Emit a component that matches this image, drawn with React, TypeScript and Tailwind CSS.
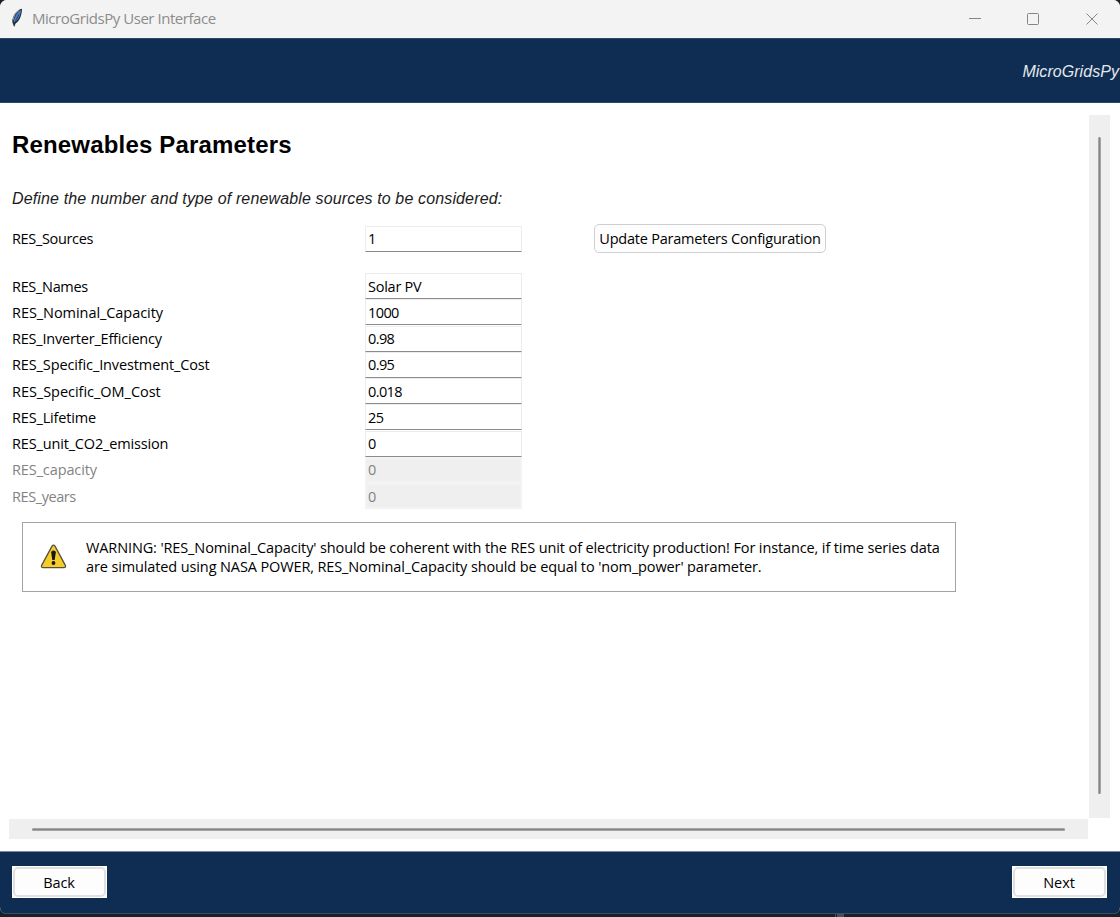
import React from "react";

type Param = { name: string; value: string; tracking: string; disabled?: boolean };

const PARAMS: Param[] = [
  { name: "RES_Names", value: "Solar PV", tracking: "tracking-[-0.32px]" },
  { name: "RES_Nominal_Capacity", value: "1000", tracking: "tracking-[-0.06px]" },
  { name: "RES_Inverter_Efficiency", value: "0.98", tracking: "tracking-[-0.2px]" },
  { name: "RES_Specific_Investment_Cost", value: "0.95", tracking: "tracking-[-0.12px]" },
  { name: "RES_Specific_OM_Cost", value: "0.018", tracking: "tracking-[-0.03px]" },
  { name: "RES_Lifetime", value: "25", tracking: "tracking-[-0.17px]" },
  { name: "RES_unit_CO2_emission", value: "0", tracking: "tracking-[-0.16px]" },
  { name: "RES_capacity", value: "0", tracking: "tracking-[-0.11px]", disabled: true },
  { name: "RES_years", value: "0", tracking: "tracking-[-0.42px]", disabled: true },
];

function Feather() {
  return (
    <svg className="mb-[2px] ml-[10px] h-5 w-[14px]" viewBox="0 0 14 20">
      <path d="M11.9.8C8.9 1.2 5.3 4.3 3.5 8.2c-1.1 2.3-1.6 4.6-1 6.6l1.7 4.2 1-3.2c2.6-1.5 4.5-4 5.5-7.3.9-2.7 1.4-5 1.2-7.7Z" fill="#2b3038" />
      <path d="M11 2C7.8 4 4.6 8.4 3.7 13.8l1 .4C8 12 10.4 8 11 2Z" fill="#4080cf" />
      <path d="M9.3 2.3C6.1 4.3 3.6 7.8 3 12.2" fill="none" stroke="#9aa3ad" strokeWidth="1" />
      <path d="M9 6.4C7.2 9.6 5.5 12.4 4.3 18" fill="none" stroke="#23272e" strokeWidth=".7" />
    </svg>
  );
}

function Field({ value, disabled }: { value: string; disabled?: boolean }) {
  return (
    <div
      className={
        disabled
          ? "flex h-[26px] w-[157px] items-center border-2 border-[#f3f3f3] bg-[#efefef] pl-[1px] text-[#838383]"
          : "flex h-[26px] w-[157px] items-center border border-[#ececec] border-b-[#8b8b8b] bg-white pl-[2px] text-black"
      }
    >
      <span className={value === "Solar PV" ? "tracking-[-0.25px]" : "tracking-[-0.6px]"}>{value}</span>
    </div>
  );
}

function NavButton({ label }: { label: string }) {
  return (
    <div className="h-[32px] w-[95px] bg-white p-[1px]">
      <button className="flex h-full w-full items-center justify-center rounded-[5px] border-2 border-[#e0e0e0] bg-[#fdfdfd] pr-[1px] tracking-[-0.1px]">
        {label}
      </button>
    </div>
  );
}

export default function App() {
  return (
    <div className="flex h-[917px] w-[1120px] flex-col overflow-hidden bg-[#17202b] font-['Open_Sans','Noto_Sans',sans-serif] text-[14.5px] leading-[19px] whitespace-nowrap text-black">
      <div className="flex h-[914px] flex-col overflow-hidden rounded-[7px] bg-white">
        <header className="flex h-[38px] shrink-0 items-center bg-[#f3f3f3]">
          <Feather />
          <span className="mb-[2px] ml-[8px] text-[15px] tracking-[-0.46px] text-[#8c8c8c]">MicroGridsPy User Interface</span>
          <svg className="ml-auto mr-[20px] h-[14px] w-[132px]" viewBox="0 0 132 14" fill="none" stroke="#858585">
            <path d="M1 6.5h12" />
            <rect x="59.5" y="1.5" width="11" height="11" rx="1" />
            <path d="m118.5 1.5 11 11m0-11-11 11" />
          </svg>
        </header>
        <div className="flex h-[65px] shrink-0 items-center justify-end border-y border-[#28466b] bg-[#0f2d52] pr-[1px]">
          <span className="mt-[2px] font-['Liberation_Sans',sans-serif] text-[16px] tracking-[0.05px] text-[#e4e8ed] italic">MicroGridsPy</span>
        </div>
        <main className="flex h-[748px] shrink-0 flex-col pt-[12px] pl-[9px]">
          <div className="flex h-[703px]">
            <section className="w-[1080px] pl-[3px]">
              <h1 className="mt-[15px] font-['Liberation_Sans',sans-serif] text-[24px] leading-[30px] font-bold tracking-[0.17px]">Renewables Parameters</h1>
              <p className="mt-[29px] font-['Liberation_Sans',sans-serif] text-[16px] leading-[20px] tracking-[0.14px] text-[#1c1c1c] italic">
                Define the number and type of renewable sources to be considered:
              </p>
              <div className="mt-[15px] flex h-[29px] items-center">
                <label className="w-[353px] tracking-[-0.34px]">RES_Sources</label>
                <Field value="1" />
                <button className="ml-[72px] h-[29px] w-[232px] rounded-[5px] border border-[#cfcfcf] bg-[#fdfdfd] tracking-[-0.22px]">
                  Update Parameters Configuration
                </button>
              </div>
              <div className="mt-[20px] flex flex-col">
                {PARAMS.map((p) => (
                  <div key={p.name} className="flex h-[26.25px] items-center">
                    <label className={`w-[353px] ${p.tracking} ${p.disabled ? "text-[#838383]" : ""}`}>{p.name}</label>
                    <Field value={p.value} disabled={p.disabled} />
                  </div>
                ))}
              </div>
              <div className="mt-[12.75px] ml-[10px] flex h-[70px] w-[934px] items-center border border-[#a3a3a3]">
                <svg className="mb-[1px] ml-[17px] h-[25px] w-[27px]" viewBox="0 0 27 25">
                  <path d="M12 2.2q1.5-2.2 3 0l10.2 18.9q1.2 2.5-1.4 2.5H3.2q-2.6 0-1.4-2.5Z" fill="#f5cd2b" stroke="#55503c" strokeWidth="1.3" />
                  <path d="M11.2 8.4q0-1.9 2.3-1.9t2.3 1.9l-1.1 7.7h-2.4Z" fill="#171717" />
                  <circle cx="13.5" cy="19" r="1.9" fill="#171717" />
                </svg>
                <p className="ml-[19px]">
                  <span className="block tracking-[-0.118px]">WARNING: 'RES_Nominal_Capacity' should be coherent with the RES unit of electricity production! For instance, if time series data</span>
                  <span className="block tracking-[-0.12px]">are simulated using NASA POWER, RES_Nominal_Capacity should be equal to 'nom_power' parameter.</span>
                </p>
              </div>
            </section>
            <div className="flex h-[703px] w-[21px] justify-center bg-[#efefef] pt-[22px]">
              <div className="h-[657px] w-[3px] rounded-sm border-x border-[#a5a5a5] bg-[#858585]" />
            </div>
          </div>
          <div className="mt-[1px] flex h-[20px] w-[1079px] items-center bg-[#efefef] pl-[23px]">
            <div className="h-[3px] w-[1033px] rounded-sm border-y border-[#a5a5a5] bg-[#858585]" />
          </div>
        </main>
        <footer className="flex h-[63px] shrink-0 items-start justify-between border-t border-b border-t-[#7489a2] border-b-[#3b4b60] bg-[#0f2d52] pt-[14px] pr-[13px] pl-[12px]">
          <NavButton label="Back" />
          <NavButton label="Next" />
        </footer>
      </div>
      <div className="flex h-[3px] pl-[835px]">
        <div className="h-[3px] w-[1px] bg-[#465160]" />
        <div className="ml-[1px] h-[3px] w-[7px] bg-[#465160]" />
      </div>
    </div>
  );
}
